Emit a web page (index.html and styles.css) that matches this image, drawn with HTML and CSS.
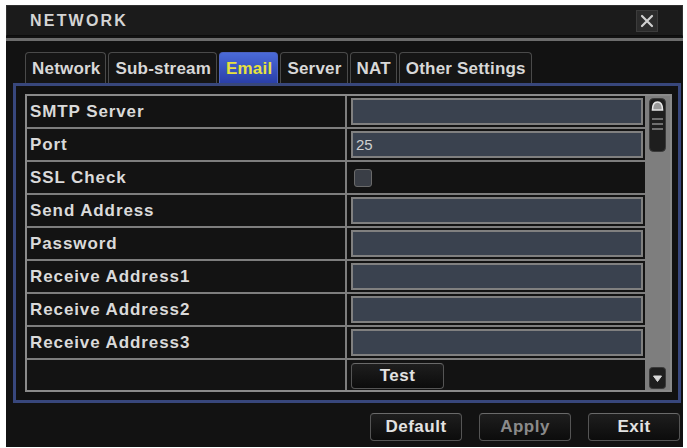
FILE: index.html
```html
<!DOCTYPE html>
<html>
<head>
<meta charset="utf-8">
<link rel="stylesheet" href="styles.css">
</head>
<body>
<div class="window">
  <div class="titlebar">
    <span class="title">NETWORK</span>
    <span class="close">
      <svg width="20" height="20" viewBox="0 0 20 20"><path d="M5 5 L15 15 M15 5 L5 15" stroke="#d0d0d0" stroke-width="2.2" stroke-linecap="round"/></svg>
    </span>
  </div>
  <div class="tabs">
    <div class="tab">Network</div>
    <div class="tab">Sub-stream</div>
    <div class="tab active">Email</div>
    <div class="tab">Server</div>
    <div class="tab">NAT</div>
    <div class="tab">Other Settings</div>
  </div>
  <div class="panel">
    <div class="tablebox">
      <div class="grid">
        <div class="label">SMTP Server</div><div class="value"><div class="input"></div></div>
        <div class="label">Port</div><div class="value"><div class="input">25</div></div>
        <div class="label">SSL Check</div><div class="value"><div class="check"></div></div>
        <div class="label">Send Address</div><div class="value"><div class="input"></div></div>
        <div class="label">Password</div><div class="value"><div class="input"></div></div>
        <div class="label">Receive Address1</div><div class="value"><div class="input"></div></div>
        <div class="label">Receive Address2</div><div class="value"><div class="input"></div></div>
        <div class="label">Receive Address3</div><div class="value"><div class="input"></div></div>
        <div class="label last"></div><div class="value last"><div class="btn test">Test</div></div>
      </div>
      <div class="scrollbar">
        <svg class="thumb" width="17" height="54" viewBox="0 0 17 54">
          <rect x="0.5" y="0.5" width="16" height="53" rx="4" fill="#1e1e1e" stroke="#3a3a3a"/>
          <path d="M3.5 12 Q3.5 4 8.5 4 Q13.5 4 13.5 12 Z" fill="#9a9a9a" stroke="#e6e6e6" stroke-width="1.6"/>
          <path d="M3 21 H14 M3 26 H14 M3 31 H14" stroke="#8a8a8a" stroke-width="1.5"/>
        </svg>
        <svg class="down" width="17" height="22" viewBox="0 0 17 22">
          <rect x="0.5" y="0.5" width="16" height="21" rx="3" fill="#1e1e1e" stroke="#3a3a3a"/>
          <path d="M4.5 9 H12.5 L8.5 14.5 Z" fill="#d8d8d8" stroke="#d8d8d8" stroke-linejoin="round"/>
        </svg>
      </div>
    </div>
  </div>
  <div class="footer">
    <div class="btn fbtn">Default</div>
    <div class="btn fbtn disabled">Apply</div>
    <div class="btn fbtn">Exit</div>
  </div>
</div>
</body>
</html>
```

FILE: styles.css
```css
html, body {
  margin: 0;
  padding: 0;
  background: #ffffff;
}
body {
  width: 687px;
  height: 448px;
  overflow: hidden;
  font-family: "Liberation Sans", Arial, sans-serif;
}
.window {
  margin: 5px 0 0 6px;
  width: 677px;
  height: 442px;
  box-sizing: border-box;
  background: #121212;
  display: flex;
  flex-direction: column;
}
.titlebar {
  height: 31px;
  box-sizing: border-box;
  background: #1b1b1b;
  border: 1px solid #303030;
  border-bottom: 1px solid #0c0c0c;
  display: flex;
  align-items: center;
  justify-content: space-between;
  padding: 0 24px 0 23px;
}
.title {
  color: #d4d4d4;
  font-weight: bold;
  font-size: 16px;
  letter-spacing: 2.2px;
}
.close {
  width: 20px;
  height: 20px;
  background: #2c2c2c;
  border: 1px solid #3c3c3c;
  display: flex;
}
.tabs {
  border-top: 3px solid #6c6c6c;
  padding: 11px 0 0 19px;
  margin-top: 2px;
  display: flex;
  gap: 2px;
  height: 31px;
}
.tab {
  height: 31px;
  box-sizing: border-box;
  padding: 2px 5px 0 6px;
  border: 1px solid #4a4a4a;
  border-bottom: none;
  border-radius: 4px 4px 0 0;
  color: #d8d8d8;
  font-weight: bold;
  font-size: 17px;
  letter-spacing: 0.2px;
  display: flex;
  align-items: center;
  background: #151515;
}
.tab.active {
  background: linear-gradient(#4a6ad8, #2a3fa8);
  border-color: #4b62c0;
  color: #e8e23c;
}
.panel {
  margin-left: 7px;
  width: 668px;
  height: 320px;
  box-sizing: border-box;
  border: 3px solid #38477c;
  background: #111111;
  padding: 8px 0 0 9px;
}
.tablebox {
  width: 647px;
  height: 298px;
  box-sizing: border-box;
  border: 2px solid #8a8a8a;
  display: flex;
  background: #131313;
}
.grid {
  display: grid;
  grid-template-columns: 320px 298px;
  grid-template-rows: repeat(8, 33px) 1fr;
}
.label {
  box-sizing: border-box;
  border-bottom: 2px solid #7e7e7e;
  border-right: 2px solid #7e7e7e;
  color: #dadada;
  font-weight: bold;
  font-size: 17px;
  letter-spacing: 0.9px;
  display: flex;
  align-items: center;
  padding-left: 3px;
}
.value {
  box-sizing: border-box;
  border-bottom: 2px solid #7e7e7e;
  display: flex;
  align-items: center;
  padding-left: 4px;
}
.label.last, .value.last {
  border-bottom: none;
}
.input {
  width: 292px;
  height: 27px;
  box-sizing: border-box;
  border: 2px solid #808080;
  background: #3a424f;
  color: #d0d0d0;
  font-size: 15px;
  display: flex;
  align-items: center;
  padding-left: 3px;
}
.check {
  width: 18px;
  height: 18px;
  margin-left: 3px;
  box-sizing: border-box;
  border: 1px solid #6a6a6a;
  border-radius: 3px;
  background: #3a3e46;
}
.scrollbar {
  flex: 1;
  background: #7e7e7e;
  display: flex;
  flex-direction: column;
  justify-content: space-between;
  align-items: center;
  padding: 2px 0 1px 0;
}
.btn {
  box-sizing: border-box;
  border: 1px solid #555555;
  border-top-color: #6a6a6a;
  border-radius: 4px;
  background: linear-gradient(#1e1e1e, #0c0c0c);
  color: #e2e2e2;
  font-weight: bold;
  font-size: 17px;
  letter-spacing: 0.5px;
  display: flex;
  align-items: center;
  justify-content: center;
}
.test {
  width: 93px;
  height: 26px;
  margin-top: 1px;
}
.footer {
  display: flex;
  justify-content: flex-end;
  gap: 17px;
  padding: 10px 3px 0 0;
}
.fbtn {
  width: 92px;
  height: 28px;
}
.fbtn.disabled {
  color: #8a8a8a;
}
```
